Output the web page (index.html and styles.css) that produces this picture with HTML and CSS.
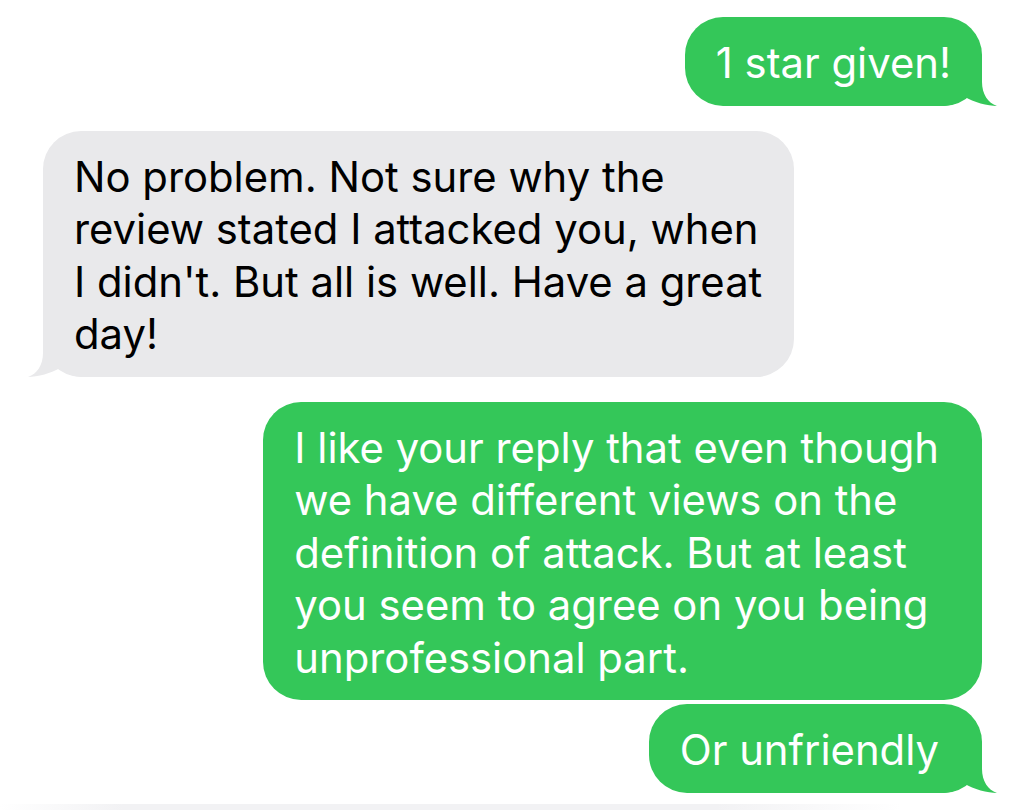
FILE: index.html
```html
<!DOCTYPE html>
<html lang="en">
<head>
    <title>Messages</title>
    <link rel="stylesheet" href="styles.css">
</head>
<body>
    <div class="thread">
        <div class="bubble sent">
            <svg class="tail" viewBox="-40 -40 56 40"><path d="M0 -40 L0 -24 C0 -12 6 -3 15 0 C6 0 -9 -4 -17 -9 C-22 -4 -30 0 -40 0 L-40 -40 Z"/></svg>
            <span class="text">1 star given!</span>
        </div>

        <div class="bubble received">
            <svg class="tail" viewBox="-40 -40 56 40"><path d="M0 -40 L0 -24 C0 -12 6 -3 15 0 C6 0 -9 -4 -17 -9 C-22 -4 -30 0 -40 0 L-40 -40 Z"/></svg>
            <span class="text">No problem. Not sure why the<br>review stated I attacked you, when<br>I didn't. But all is well. Have a great<br>day!</span>
        </div>

        <div class="bubble sent wide">
            <span class="text">I like your reply that even though<br>we have different views on the<br>definition of attack. But at least<br>you seem to agree on you being<br>unprofessional part.</span>
        </div>

        <div class="bubble sent wide same">
            <svg class="tail" viewBox="-40 -40 56 40"><path d="M0 -40 L0 -24 C0 -12 6 -3 15 0 C6 0 -9 -4 -17 -9 C-22 -4 -30 0 -40 0 L-40 -40 Z"/></svg>
            <span class="text">Or unfriendly</span>
        </div>
    </div>
    <div class="bottom-bar"></div>
</body>
</html>
```

FILE: styles.css
```css
body {
    margin: 0;
    background-color: #fff;
    font-family: Inter, "Noto Sans", sans-serif;
    height: 811px;
    overflow: hidden;
}

.thread {
    display: flex;
    flex-direction: column;
    padding: 17px 42px 0 43px;
}

.bubble {
    position: relative;
    padding: 20px 31px 16px;
    border-radius: 38px;
    font-size: 41.8px;
    line-height: 52.5px;
    white-space: nowrap;
    margin-top: 25px;
}

.bubble:first-child {
    margin-top: 0;
}

.bubble.same {
    margin-top: 4px;
}

.bubble.wide {
    padding-right: 43px;
}

.text {
    position: relative;
}

.sent {
    align-self: flex-end;
    background-color: #34c759;
    color: #fff;
}

.received {
    align-self: flex-start;
    background-color: #e9e9eb;
    color: #000;
    padding-right: 32px;
}

.tail {
    position: absolute;
    bottom: 0;
    width: 56px;
    height: 40px;
}

.sent .tail {
    right: -16px;
    fill: #34c759;
}

.received .tail {
    left: -16px;
    fill: #e9e9eb;
    transform: scaleX(-1);
}

.bottom-bar {
    margin-top: 11px;
    height: 6px;
    background: linear-gradient(to right, #fff 0%, #f2f2f4 12%, #f2f2f4 70%, #fff 88%);
}
```
